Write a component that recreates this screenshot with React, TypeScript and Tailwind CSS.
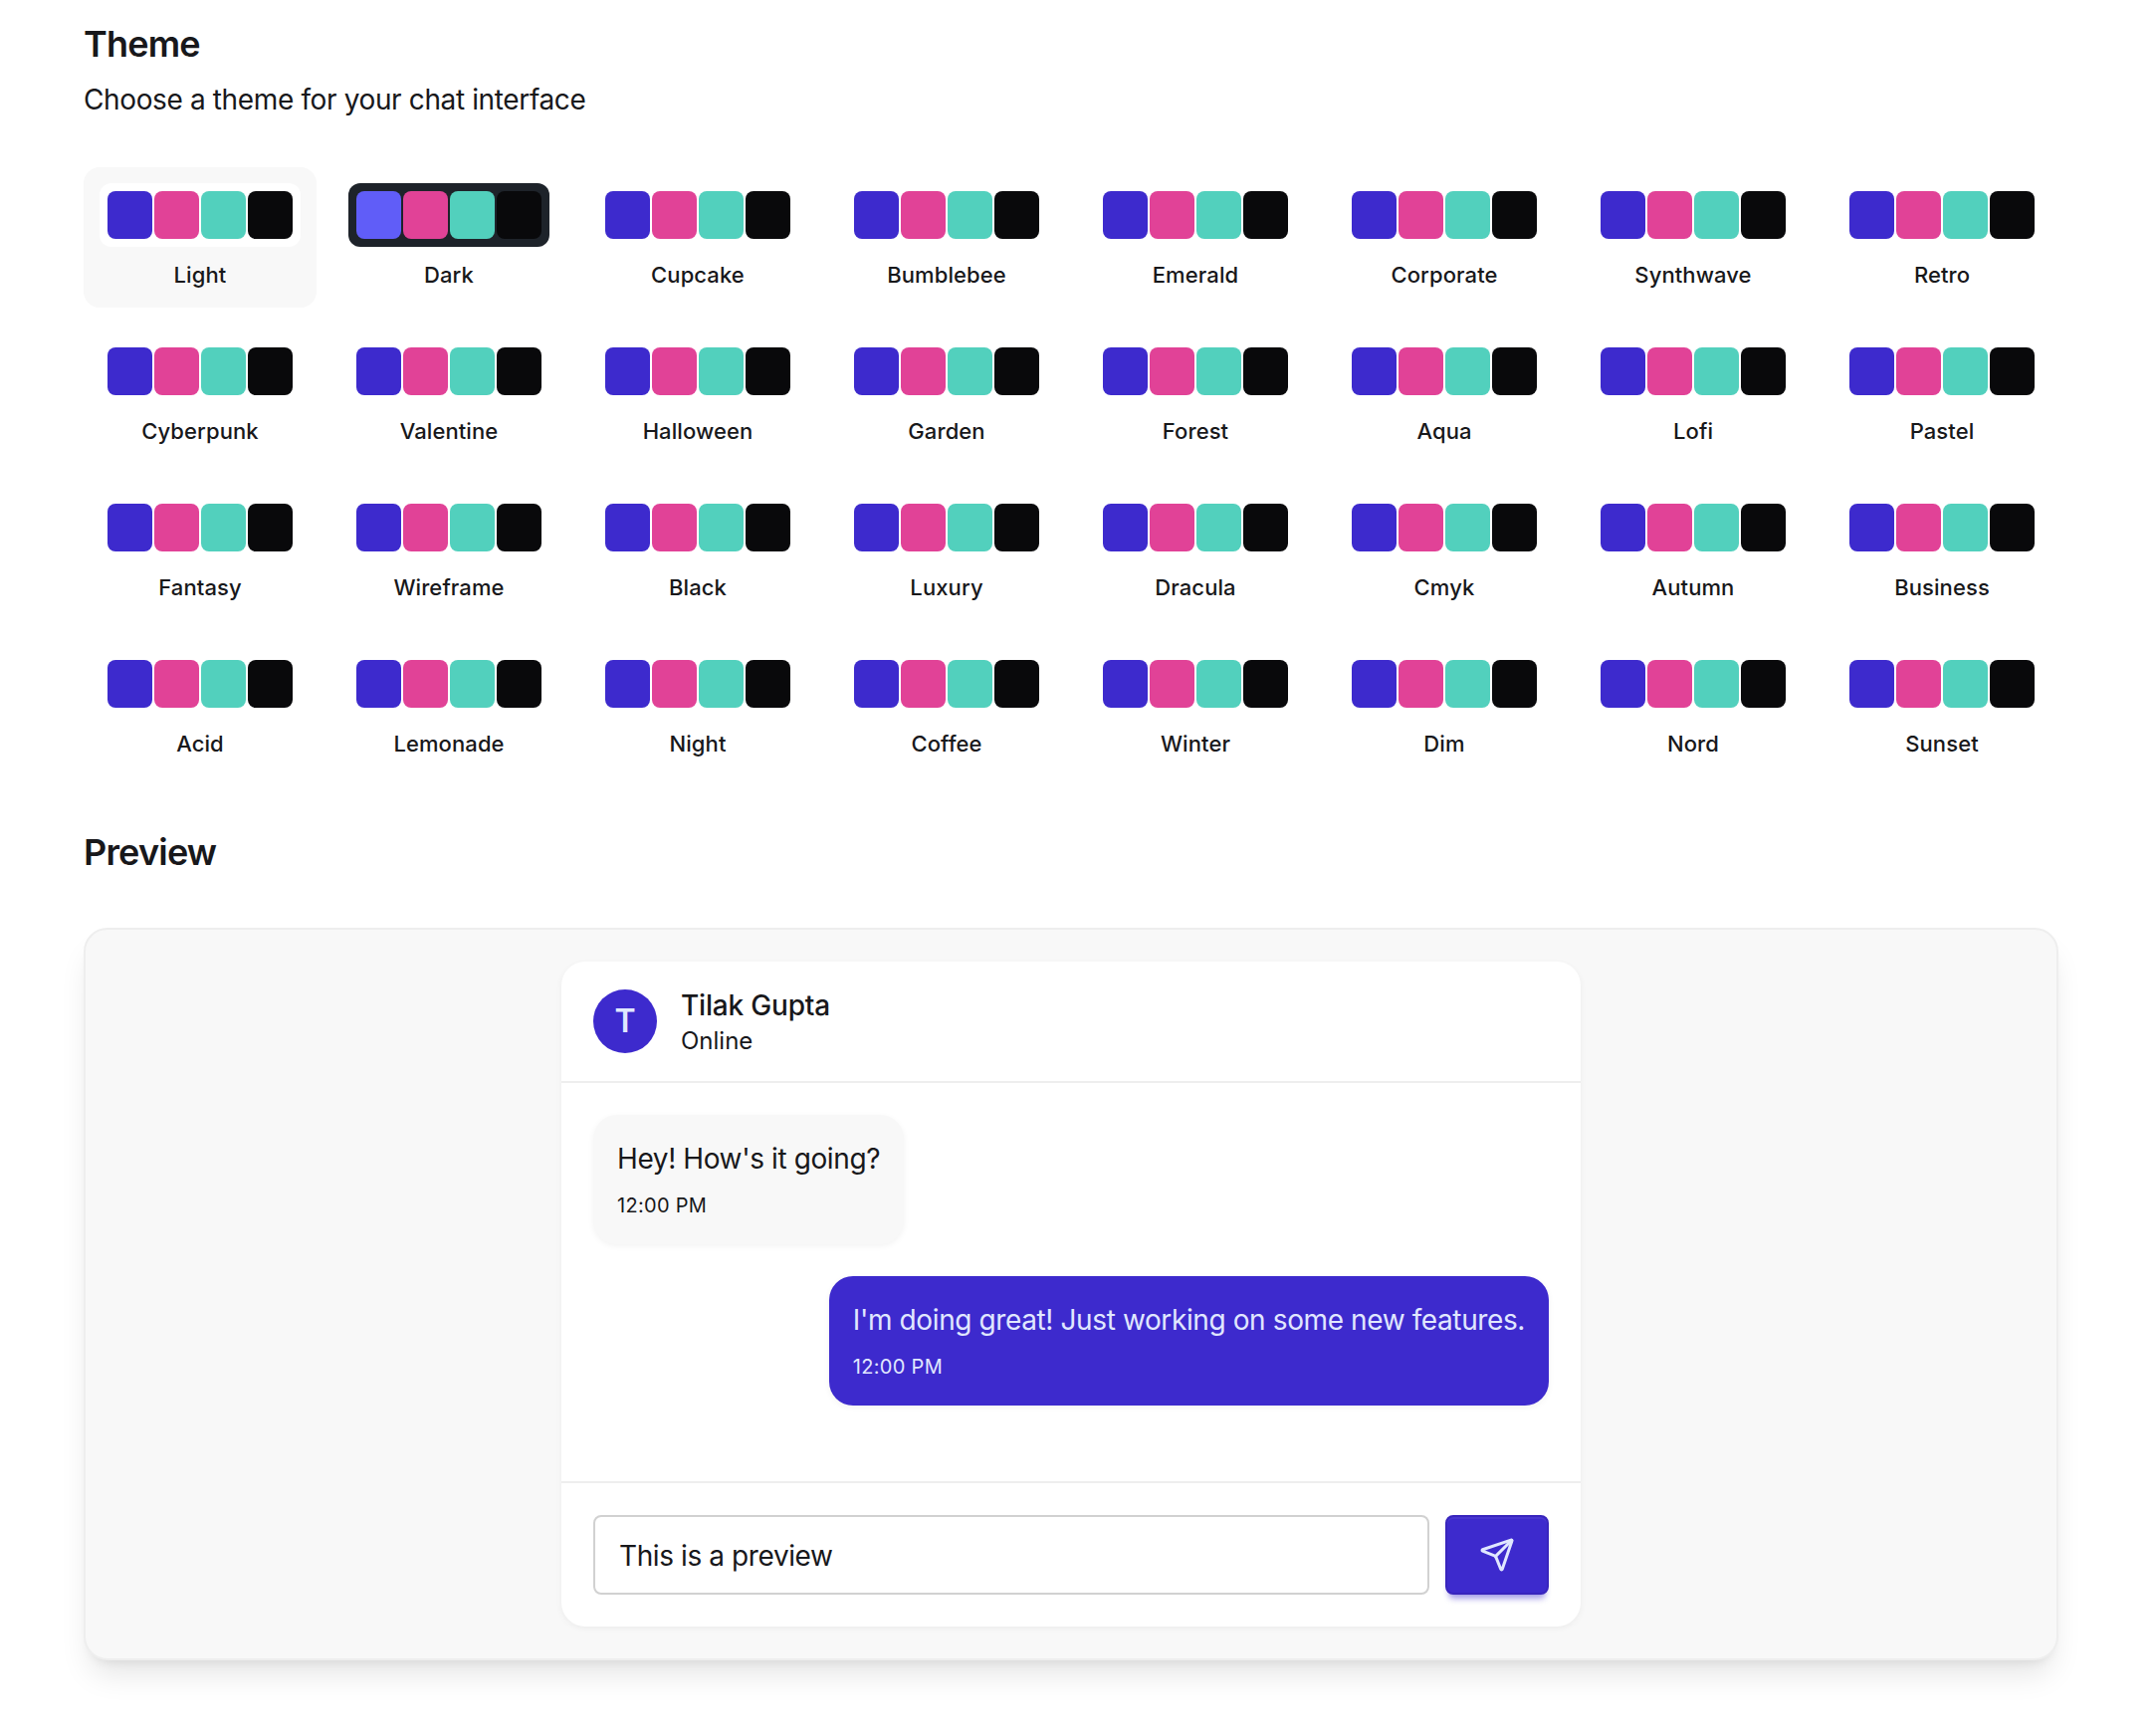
import { Send } from "lucide-react";

const THEMES = [
  "Light", "Dark", "Cupcake", "Bumblebee", "Emerald", "Corporate", "Synthwave", "Retro",
  "Cyberpunk", "Valentine", "Halloween", "Garden", "Forest", "Aqua", "Lofi", "Pastel",
  "Fantasy", "Wireframe", "Black", "Luxury", "Dracula", "Cmyk", "Autumn", "Business",
  "Acid", "Lemonade", "Night", "Coffee", "Winter", "Dim", "Nord", "Sunset",
];

const MESSAGES = [
  { id: 1, content: "Hey! How's it going?", sent: false },
  { id: 2, content: "I'm doing great! Just working on some new features.", sent: true },
];

function ThemeButton({ name, selected }: { name: string; selected: boolean }) {
  const dark = name === "Dark";
  return (
    <button className={`flex flex-col items-center gap-3 rounded-2xl p-4 ${selected ? "bg-[#f8f8f8]" : ""}`}>
      <div className={`h-16 w-full rounded-xl p-2 ${dark ? "bg-[#1e232a]" : "bg-white"}`}>
        <div className="grid h-full grid-cols-4 gap-0.5">
          <div className={`rounded-lg ${dark ? "bg-[#605df8]" : "bg-[#3d2acd]"}`} />
          <div className="rounded-lg bg-[#e14297]" />
          <div className="rounded-lg bg-[#52d0bd]" />
          <div className="rounded-lg bg-[#09090b]" />
        </div>
      </div>
      <span className="w-full truncate text-center text-[22px] leading-[33px] font-medium tracking-[0.1px]">{name}</span>
    </button>
  );
}

export default function App() {
  return (
    <div className="h-[1744px] w-full overflow-hidden bg-white pt-4 pr-24 pl-[84px] font-['Inter',sans-serif] text-[#18181b]">
      <div className="flex flex-col gap-12">
        <div className="flex flex-col gap-2">
          <h2 className="text-4xl leading-[56px] font-semibold tracking-[-0.8px]">Theme</h2>
          <p className="text-[28px] leading-10 tracking-[-0.37px]">Choose a theme for your chat interface</p>
        </div>

        <div className="grid grid-cols-8 gap-4">
          {THEMES.map((t) => (
            <ThemeButton key={t} name={t} selected={t === "Light"} />
          ))}
        </div>

        <h3 className="text-4xl leading-[56px] font-semibold tracking-[-0.8px]">Preview</h3>

        <div className="rounded-3xl border-2 border-[#eeeeee] bg-[#f8f8f8] p-8 shadow-[0_20px_30px_-6px_rgba(0,0,0,0.1),0_8px_12px_-8px_rgba(0,0,0,0.1)]">
          <div className="mx-auto w-[1024px] overflow-hidden rounded-3xl bg-white shadow-[0_2px_6px_rgba(0,0,0,0.05)]">
            <div className="flex items-center gap-6 border-b-2 border-[#eeeeee] px-8 py-6">
              <div className="flex size-16 items-center justify-center rounded-full bg-[#3d2acd] text-[32px] font-semibold text-[#e0e7ff]">
                T
              </div>
              <div>
                <h4 className="text-[28px] leading-10 font-medium tracking-[-0.18px]">Tilak Gupta</h4>
                <p className="text-2xl">Online</p>
              </div>
            </div>

            <div className="flex h-[400px] flex-col gap-8 p-8">
              {MESSAGES.map((m) => (
                <div key={m.id} className={`flex ${m.sent ? "justify-end" : "justify-start"}`}>
                  <div
                    className={`rounded-3xl p-6 shadow-[0_2px_6px_rgba(0,0,0,0.05)] ${
                      m.sent ? "bg-[#3d2acd] text-[#e0e7ff]" : "bg-[#f8f8f8]"
                    }`}
                  >
                    <p className="text-[28px] leading-10 tracking-[-0.39px]">{m.content}</p>
                    <p className="mt-3 text-xl leading-[30px] tracking-[0.3px]">12:00 PM</p>
                  </div>
                </div>
              ))}
            </div>

            <div className="flex gap-4 border-t-2 border-[#eeeeee] p-8">
              <input
                className="h-20 min-w-0 flex-1 rounded-lg border-2 border-[#d1d1d1] bg-white px-6 pt-0.5 text-[28px] tracking-[-0.4px] outline-none"
                value="This is a preview"
                readOnly
              />
              <button className="flex h-20 w-[104px] items-center justify-center rounded-lg border-2 border-[#3825bd] bg-[#3d2acd] text-[#e0e7ff] shadow-[inset_0_2px_0_rgba(255,255,255,0.06),0_6px_6px_-4px_rgba(61,42,205,0.3),0_8px_6px_-4px_rgba(61,42,205,0.3)]">
                <Send size={36} />
              </button>
            </div>
          </div>
        </div>
      </div>
    </div>
  );
}
